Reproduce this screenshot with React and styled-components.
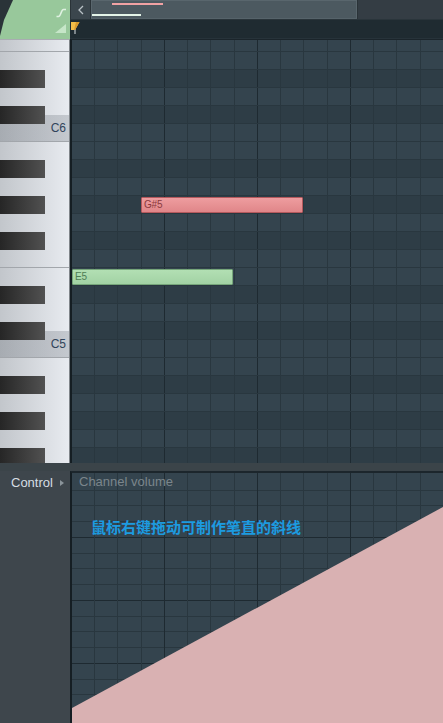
import React from "react";
import styled, { createGlobalStyle } from "styled-components";

const NOTES = ["F6", "E6", "D#6", "D6", "C#6", "C6", "B5", "A#5", "A5", "G#5", "G5", "F#5", "F5", "E5", "D#5", "D5", "C#5", "C5", "B4", "A#4", "A4", "G#4", "G4", "F#4"];

// clips on the roll: start / length in px from grid origin
const CLIPS = {
  "G#5": { start: 69, length: 162, tone: "red" },
  E5: { start: 0, length: 161, tone: "green" },
};

const isBlack = (n) => n.includes("#");

function App() {
  return (
    <>
      <GlobalStyle />
      <Screen>
        <Header>
          <GreenTile>
            <svg width="70" height="39" viewBox="0 0 70 39">
              <path d="M56.5 16.5 H58.5 C61 16.5 61 9.5 63.5 9.5 H66" fill="none" stroke="#dff1e1" strokeWidth="1.6" />
              <polygon points="55,33 66,24 66,33" fill="#c6e6c8" />
            </svg>
          </GreenTile>
          <HeaderRight>
            <TopBar>
              <ScrollButton>
                <svg width="8" height="10" viewBox="0 0 8 10">
                  <polyline points="6,1 2,5 6,9" fill="none" stroke="#b9c1c6" strokeWidth="1.3" />
                </svg>
              </ScrollButton>
              <ScrollTrack>
                <TrackBar $color="#f1a2a4" $left={20} $width={51} />
                <TrackBar $color="#e4f4e8" $left={0} $width={49} />
              </ScrollTrack>
              <TopFiller />
            </TopBar>
            <Timeline>
              <svg width="10" height="13" viewBox="0 0 10 13">
                <rect x="3" y="8" width="2" height="5" fill="#7d868b" />
                <polygon points="0,1 8.5,1 4,9 0,9" fill="#f2bd48" />
                <polygon points="5,1 8.5,1 4,9 3,9" fill="#d99a2c" />
              </svg>
            </Timeline>
          </HeaderRight>
        </Header>

        <Main>
          <Keyboard>
            <KeyStack>
              {NOTES.map((n) => {
                const letter = n[0];
                const black = isBlack(n);
                return (
                  <KeyRow
                    key={n}
                    $shade={!black && letter === "C" ? "full" : black && letter === "C" ? "half" : "none"}
                    $edge={!black && (letter === "F" || letter === "C")}
                  >
                    {black && <BlackKey />}
                    {!black && letter === "C" && <KeyLabel>{n}</KeyLabel>}
                  </KeyRow>
                );
              })}
            </KeyStack>
          </Keyboard>
          <RollGrid>
            <KeyStack>
              {NOTES.map((n) => {
                const clip = CLIPS[n];
                return (
                  <GridRow key={n} $black={isBlack(n)}>
                    {clip && (
                      <Clip $tone={clip.tone} style={{ marginLeft: clip.start, width: clip.length }}>
                        {n}
                      </Clip>
                    )}
                  </GridRow>
                );
              })}
            </KeyStack>
          </RollGrid>
        </Main>

        <Divider />

        <ControlArea>
          <ControlSide>
            <ControlLabel>Control</ControlLabel>
            <Caret />
          </ControlSide>
          <ControlGrid>
            <Curve viewBox="0 0 371 250" preserveAspectRatio="none">
              <polygon points="0,235 371,34 371,250 0,250" fill="#d9b1b2" />
            </Curve>
            <ParamName>Channel volume</ParamName>
            <Hint>鼠标右键拖动可制作笔直的斜线</Hint>
          </ControlGrid>
        </ControlArea>
      </Screen>
    </>
  );
}

const GlobalStyle = createGlobalStyle`
  html, body {
    margin: 0;
    padding: 0;
    background: #343e45;
    overflow: hidden;
  }
  body {
    font-family: "Liberation Sans", Arial, sans-serif;
  }
`;

const vLines = `
  repeating-linear-gradient(to right, transparent 0 92px, #1e2a31 92px 93px),
  repeating-linear-gradient(to right, transparent 0 22.25px, #29373f 22.25px 23.25px)
`;

const Screen = styled.div`
  width: 443px;
  height: 723px;
  display: flex;
  flex-direction: column;
  background: #343e45;
  overflow: hidden;
`;

const Header = styled.div`
  display: flex;
  height: 39px;
  background: #2a3338;
`;

const GreenTile = styled.div`
  width: 70px;
  height: 39px;
  background: #98c89b;
  clip-path: polygon(13px 0, 100% 0, 100% 100%, 0 100%, 0 36px, 4px 20px);
  svg {
    display: block;
  }
`;

const HeaderRight = styled.div`
  flex: 1;
  display: flex;
  flex-direction: column;
`;

const TopBar = styled.div`
  display: flex;
  height: 19px;
  gap: 1px;
  padding-left: 1px;
  border-bottom: 1px solid #2a353b;
`;

const ScrollButton = styled.div`
  width: 19px;
  display: flex;
  align-items: center;
  justify-content: center;
  background: #3b464d;
`;

const ScrollTrack = styled.div`
  width: 264px;
  display: flex;
  flex-direction: column;
  justify-content: space-between;
  padding: 2px 0;
  background: #4c5960;
  border: 1px solid #59666d;
  border-bottom-color: #56636a;
`;

const TrackBar = styled.div`
  height: 2px;
  width: ${(p) => p.$width}px;
  margin-left: ${(p) => p.$left}px;
  background: ${(p) => p.$color};
`;

const TopFiller = styled.div`
  flex: 1;
  background: #343d44;
`;

const Timeline = styled.div`
  height: 18px;
  display: flex;
  align-items: flex-start;
  padding-left: 1px;
  background: #1f2b31;
  border-bottom: 1px solid #27333a;
  svg {
    display: block;
    margin-top: 1px;
  }
`;

const Main = styled.div`
  display: flex;
  height: 424px;
`;

const Keyboard = styled.div`
  width: 69px;
  border-top: 1px solid #a8acb1;
  border-right: 1px solid #80858a;
  overflow: hidden;
`;

const KeyStack = styled.div`
  margin-top: -6px;
  display: flex;
  flex-direction: column;
`;

const KeyRow = styled.div`
  box-sizing: border-box;
  height: 18px;
  display: flex;
  justify-content: space-between;
  align-items: flex-start;
  border-bottom: ${(p) => (p.$edge ? "1px solid #a2a6ab" : "none")};
  background: ${(p) =>
      p.$shade === "full"
        ? "linear-gradient(rgba(70,78,88,0.22), rgba(70,78,88,0.22)),"
        : p.$shade === "half"
        ? "linear-gradient(to bottom, transparent 9px, rgba(70,78,88,0.22) 9px),"
        : ""}
    linear-gradient(to right, #c2c6cb, #e8ebf0);
`;

const BlackKey = styled.div`
  width: 45px;
  height: 18px;
  background: linear-gradient(to right, #262626, #515151);
`;

const KeyLabel = styled.span`
  margin-left: auto;
  margin-top: -3px;
  padding-right: 3px;
  font-size: 12px;
  line-height: 14px;
  color: #31445a;
`;

const RollGrid = styled.div`
  flex: 1;
  border-left: 2px solid #151e23;
  border-top: 1px solid #1b252b;
  overflow: hidden;
`;

const GridRow = styled.div`
  box-sizing: border-box;
  height: 18px;
  display: flex;
  align-items: flex-start;
  border-bottom: 1px solid #29373f;
  background: ${vLines}, ${(p) => (p.$black ? "#2e3d46" : "#34444e")};
`;

const Clip = styled.div`
  box-sizing: border-box;
  height: 16px;
  margin-top: 1px;
  padding-left: 2px;
  font-size: 10px;
  line-height: 14px;
  letter-spacing: -0.2px;
  border-radius: 1px;
  border: 1px solid ${(p) => (p.$tone === "red" ? "#b5595d" : "#76a67a")};
  color: ${(p) => (p.$tone === "red" ? "#8c3a3d" : "#4f7d55")};
  background: ${(p) =>
    p.$tone === "red"
      ? "linear-gradient(#ee9d9f, #e08689)"
      : "linear-gradient(#b2dfb3, #a2d2a4)"};
`;

const Divider = styled.div`
  height: 8px;
  background: #3b4449;
`;

const ControlArea = styled.div`
  display: flex;
  height: 252px;
`;

const ControlSide = styled.div`
  width: 70px;
  display: flex;
  align-items: flex-start;
  padding-top: 4px;
  box-sizing: border-box;
  background: #3e464c;
`;

const ControlLabel = styled.span`
  margin-left: 11px;
  font-size: 13px;
  line-height: 16px;
  color: #d6dee3;
`;

const Caret = styled.span`
  width: 0;
  height: 0;
  margin: 5px 0 0 7px;
  border-top: 3px solid transparent;
  border-bottom: 3px solid transparent;
  border-left: 4px solid #8a949a;
`;

const ControlGrid = styled.div`
  position: relative;
  flex: 1;
  display: flex;
  flex-direction: column;
  align-items: flex-start;
  padding-top: 1px;
  border-left: 2px solid #151e23;
  border-top: 2px solid #1c262c;
  background:
    ${vLines},
    repeating-linear-gradient(to bottom, transparent 0 62px, #1e2a31 62px 63px),
    repeating-linear-gradient(to bottom, transparent 0 14.75px, #29373f 14.75px 15.75px),
    #34444e;
  background-position: 0 0, 0 0, 0 2px, 0 2px, 0 0;
  overflow: hidden;
`;

const Curve = styled.svg`
  position: absolute;
  inset: 0;
  width: 100%;
  height: 100%;
`;

const ParamName = styled.span`
  position: relative;
  margin-left: 7px;
  font-size: 13px;
  line-height: 16px;
  color: #7b868c;
`;

const Hint = styled.span`
  position: relative;
  margin: 27px 0 0 19px;
  font-family: "Noto Sans CJK SC", "Liberation Sans", sans-serif;
  font-weight: 700;
  font-size: 15px;
  line-height: 20px;
  color: #1c9be0;
`;

export default App;
